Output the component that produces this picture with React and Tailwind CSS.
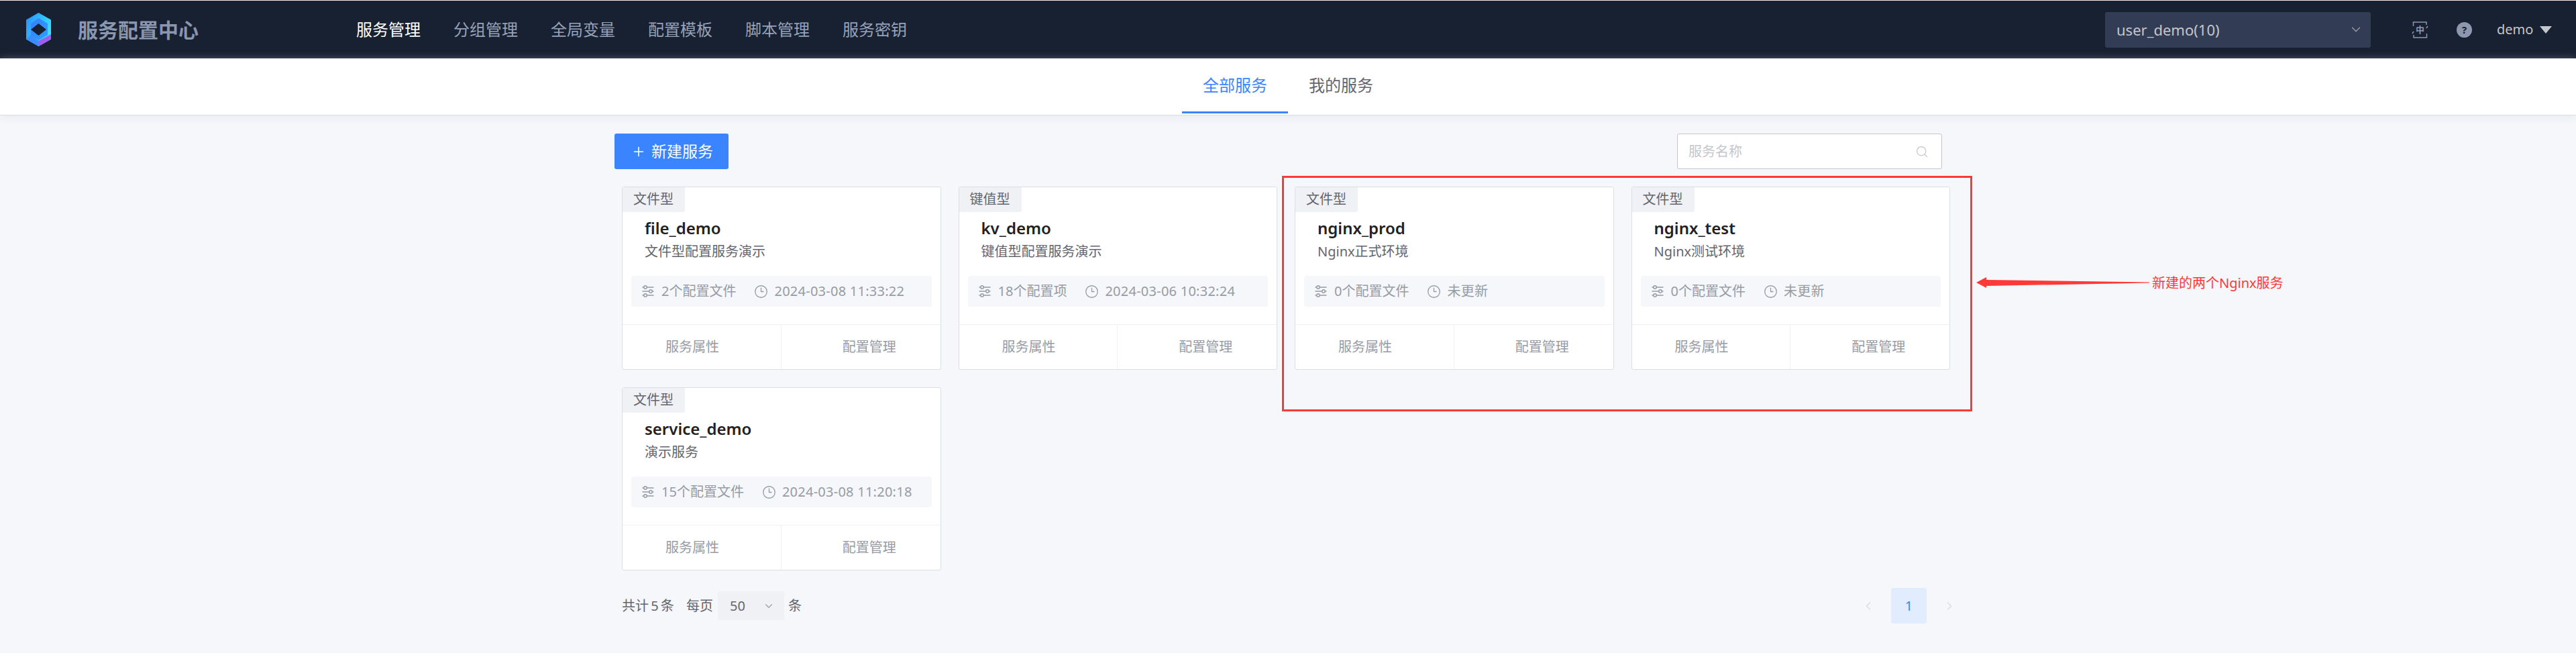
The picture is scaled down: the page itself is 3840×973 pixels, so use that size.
import React from 'react';
import { ChevronDown, ChevronLeft, ChevronRight, Search, Clock3, Plus } from 'lucide-react';

const nav = ['服务管理', '分组管理', '全局变量', '配置模板', '脚本管理', '服务密钥'];

const services = [
  { type: '文件型', name: 'file_demo', desc: '文件型配置服务演示', count: '2个配置文件', time: '2024-03-08 11:33:22' },
  { type: '键值型', name: 'kv_demo', desc: '键值型配置服务演示', count: '18个配置项', time: '2024-03-06 10:32:24' },
  { type: '文件型', name: 'nginx_prod', desc: 'Nginx正式环境', count: '0个配置文件', time: '未更新' },
  { type: '文件型', name: 'nginx_test', desc: 'Nginx测试环境', count: '0个配置文件', time: '未更新' },
  { type: '文件型', name: 'service_demo', desc: '演示服务', count: '15个配置文件', time: '2024-03-08 11:20:18' },
];

const Logo = () => (
  <svg width="37" height="50" viewBox="0 0 37 50">
    <defs>
      <linearGradient id="logoOuter" x1="0" y1="0" x2="1" y2="0.6">
        <stop offset="0" stopColor="#2a8dff" />
        <stop offset="1" stopColor="#38e6ff" />
      </linearGradient>
      <linearGradient id="logoInner" x1="0" y1="0" x2="1" y2="1">
        <stop offset="0" stopColor="#3a7bff" />
        <stop offset="1" stopColor="#2aa2ff" />
      </linearGradient>
    </defs>
    <path d="M18.5 0 37 10.5v29L18.5 50 0 39.500v-29z" fill="url(#logoOuter)" />
    <path d="M18.500 8 32 16v17L18.500 41 7 34V16z" fill="url(#logoInner)" />
    <path d="M37 32v7.500L18.500 50l0-8z" fill="#a05cf2" />
    <path d="M0 39.500 18.500 50V42L6.500 33z" fill="#3c8cff" />
    <path d="M18.500 16 30 25 18.500 34 7 25z" fill="#182132" />
  </svg>
);

const SlidersIcon = () => (
  <svg width="18" height="18" viewBox="0 0 18 18" fill="none" stroke="#979ba5" strokeWidth="1.5">
    <path d="M0.500 3h2M7.500 3h10M0.500 9h10M15.500 9h2M0.500 15h2M7.500 15h10" />
    <circle cx="5" cy="3" r="2.250" />
    <circle cx="13" cy="9" r="2.250" />
    <circle cx="5" cy="15" r="2.250" />
  </svg>
);

const LangIcon = () => (
  <div className="relative flex h-[25px] w-[25px] items-center justify-center">
    <svg className="absolute inset-0" width="25" height="25" viewBox="0 0 25 25" fill="none" stroke="#8d97ae" strokeWidth="1.500">
      <path d="M2.500 7V1h19.500v4M22 10l2-3M22.500 18v6H3v-4M3 15l-2 3" />
    </svg>
    <span className="text-[13px] font-bold leading-none text-[#8d97ae]">中</span>
  </div>
);

const ServiceCard = ({ item }) => (
  <div className="flex h-[273px] flex-col rounded-[3px] border border-[#dcdee5] bg-white">
    <div className="h-[37px] w-[93px] rounded-br-[3px] bg-[#f0f1f5] pl-[16px] text-[20px] leading-[36px] text-[#63656e]">
      {item.type}
    </div>
    <div className="h-[32px] pl-[33px] pt-[8px] text-[24px] font-semibold leading-[32px] text-[#212124]">{item.name}</div>
    <div className="mt-[13px] pl-[33px] text-[20px] leading-[28px] text-[#63656e]">{item.desc}</div>
    <div className="mx-[13px] mt-[22px] flex h-[46px] items-center rounded-[4px] bg-[#f5f7fa] pl-[16px] text-[20px] text-[#979ba5]">
      <SlidersIcon />
      <span className="ml-[11px]">{item.count}</span>
      <Clock3 className="ml-[27px] h-[21px] w-[21px]" strokeWidth={1.5} />
      <span className="ml-[9px] tracking-[0.25px]">{item.time}</span>
    </div>
    <div className="mt-auto flex h-[67px] border-t border-[#f0f1f5] text-[20px] text-[#979ba5]">
      <div className="flex w-1/2 items-center border-r border-[#f0f1f5] pl-[64px]">服务属性</div>
      <div className="flex w-1/2 items-center pl-[91px]">配置管理</div>
    </div>
  </div>
);

export default function App() {
  return (
    <div className="relative h-[973px] overflow-hidden bg-[#f5f7fa] font-['Noto_Sans','Noto_Sans_CJK_SC',sans-serif]">
      <div className="h-px bg-[#f9e8ea]" />
      <header className="flex h-[86px] items-center bg-[#182132] pl-[39px] pr-[36px]">
        <Logo />
        <div className="ml-[40px] w-[415px] text-[30px] font-bold text-[#8a96ad]">服务配置中心</div>
        <nav className="flex gap-[49px] text-[24px] text-[#96a2b9]">
          {nav.map((label, i) => (
            <span key={label} className={i === 0 ? 'text-white' : ''}>{label}</span>
          ))}
        </nav>
        <div className="ml-auto flex items-center">
          <div className="flex h-[53px] w-[396px] items-center justify-between rounded-[3px] bg-[#323d55] pl-[17px] pr-[11px] text-[22px] text-[#c4c6cc]">
            user_demo(10)
            <ChevronDown className="h-[22px] w-[22px] text-[#979ba5]" strokeWidth={1.5} />
          </div>
          <div className="ml-[61px]"><LangIcon /></div>
          <div className="ml-[42px] flex h-[23px] w-[23px] items-center justify-center rounded-full bg-[#8d97ae] text-[15px] font-bold text-[#182132]">?</div>
          <span className="ml-[37px] w-[54px] text-[20px] text-[#c4c6cc]">demo</span>
          <span className="ml-[10px] h-0 w-0 border-x-[9px] border-t-[11px] border-x-transparent border-t-[#c4c6cc]" />
        </div>
      </header>

      <div className="flex h-[85px] justify-center border-b border-[#dcdee5] bg-white shadow-[0_3px_12px_rgba(220,222,229,0.5)]">
        <div className="flex h-[82px] w-[158px] items-center justify-center border-b-[3px] border-[#3a84ff] text-[24px] text-[#3a84ff]">全部服务</div>
        <div className="flex h-[82px] w-[158px] items-center justify-center pb-[3px] text-[24px] text-[#63656e]">我的服务</div>
      </div>

      <main className="ml-[916px] w-[1979px] pt-[27px]">
        <div className="flex justify-between">
          <button className="flex h-[53px] w-[170px] items-center justify-center gap-[8px] rounded-[3px] bg-[#3a84ff] pl-[2px] text-[23px] text-white">
            <Plus className="h-[22px] w-[22px]" strokeWidth={1.75} />
            新建服务
          </button>
          <div className="flex h-[53px] w-[395px] items-center justify-between rounded-[3px] border border-[#c4c6cc] bg-white pl-[16px] pr-[19px] text-[20px] text-[#c4c6cc]">
            服务名称
            <Search className="h-[20px] w-[20px]" strokeWidth={1.5} />
          </div>
        </div>

        <div className="ml-[11px] mt-[26px] grid w-[1980px] grid-cols-4 gap-x-[26px] gap-y-[26px]">
          {services.map((item) => (
            <ServiceCard key={item.name} item={item} />
          ))}
        </div>

        <div className="ml-[11px] mt-[26px] flex h-[53px] w-[1980px] items-center text-[20px] text-[#63656e]">
          <span className="w-[78px] whitespace-nowrap [word-spacing:-2px]">共计 5 条</span>
          <span className="ml-[18px]">每页</span>
          <div className="ml-[7px] flex h-[43px] w-[99px] items-center justify-between rounded-[3px] bg-[#f0f1f5] pl-[18px] pr-[14px]">
            50
            <ChevronDown className="h-[18px] w-[18px] text-[#979ba5]" strokeWidth={1.5} />
          </div>
          <span className="ml-[6px]">条</span>
          <div className="-mr-[9px] ml-auto flex items-center">
            <ChevronLeft className="h-[20px] w-[20px] text-[#dcdee5]" strokeWidth={2} />
            <div className="mx-[24px] flex h-[53px] w-[53px] items-center justify-center rounded-[4px] bg-[#e1ecff] text-[#3a84ff]">1</div>
            <ChevronRight className="h-[20px] w-[20px] text-[#dcdee5]" strokeWidth={2} />
          </div>
        </div>
      </main>

      {/* red annotation drawn over the screenshot */}
      <div className="absolute left-[1911px] top-[262px] h-[351px] w-[1029px] border-[3px] border-[#ff3838]" />
      <svg className="absolute left-[2946px] top-[410px]" width="260" height="22" viewBox="0 0 260 22">
        <path d="M0 11 15 3v4L258 10.500v1L15 16v3z" fill="#ff3838" />
      </svg>
      <div className="absolute left-[3208px] top-[406px] text-[20px] leading-[32px] text-[#ff3838]">新建的两个Nginx服务</div>
    </div>
  );
}
